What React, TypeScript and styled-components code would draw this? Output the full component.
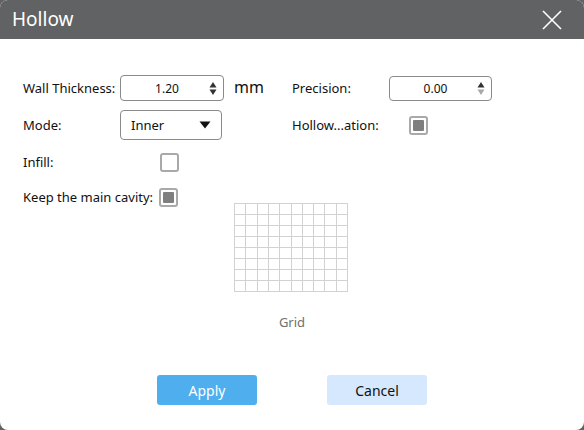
import React from 'react'
import styled, { createGlobalStyle } from 'styled-components'

const GlobalStyle = createGlobalStyle`
  html, body {
    margin: 0;
    padding: 0;
    background: #616264;
  }
  body {
    font-family: 'Noto Sans', 'Liberation Sans', sans-serif;
    color: #111;
  }
`

const Dialog = styled.div`
  width: 584px;
  height: 430px;
  background: #fff;
  border-radius: 8px;
  overflow: hidden;
  display: flex;
  flex-direction: column;
`

const TitleBar = styled.div`
  height: 39px;
  flex: none;
  background: #616264;
  display: flex;
  align-items: center;
  justify-content: space-between;
  padding: 0 22px 0 12px;
`

const Title = styled.span`
  font-size: 19px;
  color: #fff;
  line-height: 1;
  margin-top: -1px;
`

const CloseIcon = () => (
  <svg width="20" height="20" viewBox="0 0 20 20">
    <path d="M1 1L19 19M19 1L1 19" stroke="#fff" strokeWidth="1.6" />
  </svg>
)

const Body = styled.div`
  flex: 1;
  padding: 36px 0 0 23px;
  display: flex;
  flex-direction: column;
`

const Row = styled.div<{ $h: number; $gap: number }>`
  height: ${(p) => p.$h}px;
  margin-top: ${(p) => p.$gap}px;
  display: flex;
  align-items: center;
  font-size: 13px;
`

const Label = styled.div<{ $w?: number }>`
  width: ${(p) => (p.$w ? `${p.$w}px` : 'auto')};
  flex: none;
  white-space: nowrap;
`

const Field = styled.div<{ $w: number; $h: number }>`
  width: ${(p) => p.$w}px;
  height: ${(p) => p.$h}px;
  box-sizing: border-box;
  border: 1px solid #8a8a8a;
  border-radius: 4px;
  display: flex;
  align-items: center;
  flex: none;
`

const SpinValue = styled.span`
  flex: 1;
  text-align: center;
  font-size: 12px;
  padding-left: 4px;
`

const SpinArrows = ({ downDisabled }: { downDisabled?: boolean }) => (
  <svg width="8" height="15" viewBox="0 0 8 15" style={{ marginRight: 6 }}>
    <path d="M4 1L7.5 6.5H0.5Z" fill="#333" />
    <path d="M4 14L7.5 8.5H0.5Z" fill={downDisabled ? '#a8a8a8' : '#333'} />
  </svg>
)

const Unit = styled.span`
  font-size: 16px;
  margin-left: 10px;
  width: 58px;
  margin-top: -2px;
`

const ComboText = styled.span`
  flex: 1;
  font-size: 13px;
  padding-left: 10px;
`

const ComboArrow = () => (
  <svg width="12" height="8" viewBox="0 0 12 8" style={{ marginRight: 10 }}>
    <path d="M0.5 0.5H11.5L6 7.5Z" fill="#111" />
  </svg>
)

const Check = styled.div<{ $checked?: boolean; $ml: number }>`
  width: 19px;
  height: 19px;
  margin-left: ${(p) => p.$ml}px;
  box-sizing: border-box;
  border: 2px solid #a9a9a9;
  border-radius: 3px;
  padding: 2px;
  flex: none;

  &::after {
    content: '';
    display: ${(p) => (p.$checked ? 'block' : 'none')};
    width: 100%;
    height: 100%;
    background: #7f7f7f;
    border-radius: 1px;
  }
`

const Preview = styled.div`
  margin: -5px 0 0 -23px;
  display: flex;
  flex-direction: column;
  align-items: center;
`

const GridCaption = styled.div`
  font-size: 13px;
  color: #707070;
  margin-top: 21px;
  line-height: 18px;
`

const GridPicture = () => {
  const cols = 10
  const rows = 8
  const w = 113
  const h = 88
  const lines = []
  for (let i = 0; i <= cols; i++) {
    const x = 0.5 + Math.round((i * w) / cols)
    lines.push(<line key={`c${i}`} x1={x} y1={0} x2={x} y2={h + 1} stroke="#d2d2d2" />)
  }
  for (let j = 0; j <= rows; j++) {
    const y = 0.5 + Math.round((j * h) / rows)
    lines.push(<line key={`r${j}`} x1={0} y1={y} x2={w + 1} y2={y} stroke="#d2d2d2" />)
  }
  return (
    <svg width={w + 1} height={h + 1} style={{ marginLeft: -2 }}>
      {lines}
    </svg>
  )
}

const Buttons = styled.div`
  margin: 44px 0 0 -23px;
  display: flex;
  justify-content: center;
  gap: 70px;
`

const Button = styled.button<{ $primary?: boolean }>`
  width: 100px;
  height: 30px;
  border: none;
  border-radius: 3px;
  font-family: inherit;
  font-size: 14px;
  background: ${(p) => (p.$primary ? '#4eaeee' : '#d6e8fd')};
  color: ${(p) => (p.$primary ? '#fff' : '#111')};
`

export default function App() {
  return (
    <>
      <GlobalStyle />
      <Dialog>
        <TitleBar>
          <Title>Hollow</Title>
          <CloseIcon />
        </TitleBar>
        <Body>
          <Row $h={26} $gap={0}>
            <Label $w={97}>Wall Thickness:</Label>
            <Field $w={104} $h={26}>
              <SpinValue>1.20</SpinValue>
              <SpinArrows />
            </Field>
            <Unit>mm</Unit>
            <Label $w={97}>Precision:</Label>
            <Field $w={103} $h={25}>
              <SpinValue>0.00</SpinValue>
              <SpinArrows downDisabled />
            </Field>
          </Row>
          <Row $h={30} $gap={9}>
            <Label $w={97}>Mode:</Label>
            <Field $w={102} $h={30}>
              <ComboText>Inner</ComboText>
              <ComboArrow />
            </Field>
            <Label $w={70} style={{ marginLeft: 70 }}>Hollow...ation:</Label>
            <Check $checked $ml={47} />
          </Row>
          <Row $h={22} $gap={11}>
            <Label $w={97}>Infill:</Label>
            <Check $ml={40} />
          </Row>
          <Row $h={22} $gap={13}>
            <Label>Keep the main cavity:</Label>
            <Check $checked $ml={6} />
          </Row>
          <Preview>
            <GridPicture />
            <GridCaption>Grid</GridCaption>
          </Preview>
          <Buttons>
            <Button $primary>Apply</Button>
            <Button>Cancel</Button>
          </Buttons>
        </Body>
      </Dialog>
    </>
  )
}
